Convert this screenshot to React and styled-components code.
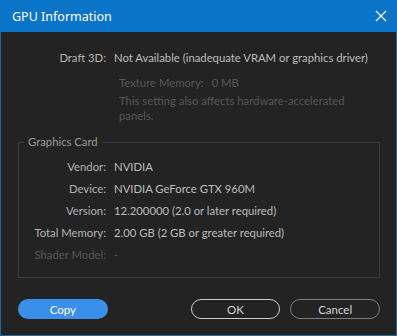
import React from 'react';
import styled, { createGlobalStyle } from 'styled-components';

const GlobalStyle = createGlobalStyle`
  html, body {
    margin: 0;
    padding: 0;
    background: #232323;
  }
  body {
    font-family: Lato, 'Liberation Sans', sans-serif;
  }
`;

const Window = styled.div`
  width: 397px;
  height: 336px;
  box-sizing: border-box;
  border: 1px solid #2b6699;
  border-top: none;
  background: #232323;
  display: flex;
  flex-direction: column;
`;

const TitleBar = styled.div`
  height: 32px;
  margin: 0 -1px;
  background: #0a74c8;
  display: flex;
  align-items: center;
  justify-content: space-between;
  padding: 0 10px 0 12px;
  color: #ffffff;
  font-family: 'Noto Sans', sans-serif;
  font-size: 12.5px;
`;

const CloseButton = styled.span`
  display: flex;
  align-items: center;
`;

const Body = styled.div`
  flex: 1;
  display: flex;
  flex-direction: column;
  padding: 14px 16px 0 16px;
  font-size: 11.3px;
`;

const Row = styled.div`
  display: grid;
  grid-template-columns: ${({ labelWidth }) => labelWidth}px 1fr;
  column-gap: 8px;
  align-items: center;
  height: 22px;
`;

const Label = styled.span`
  text-align: right;
  color: ${({ disabled }) => (disabled ? '#575757' : '#b3b3b3')};
  white-space: nowrap;
`;

const Value = styled.span`
  color: ${({ disabled }) => (disabled ? '#575757' : '#bdbdbd')};
  white-space: nowrap;
`;

const SubBlock = styled.div`
  padding-left: 102px;
  margin-top: 8px;
  display: flex;
  flex-direction: column;
  gap: 3px;
  color: #575757;
  line-height: 14px;
`;

const SubRow = styled.div`
  display: flex;
  gap: 8px;
`;

const Note = styled.div`
  line-height: 15px;
  width: 250px;
`;

const Group = styled.fieldset`
  margin: 12px 0 0 1px;
  padding: 6px 0 12px 0;
  border: 1px solid #3a3a3a;
  min-width: 0;
`;

const Legend = styled.legend`
  margin-left: 5px;
  padding: 0 4px;
  color: #9a9a9a;
  line-height: 14px;
`;

const Footer = styled.div`
  display: flex;
  align-items: center;
  padding: 21px 0 0 1px;
`;

const Button = styled.button`
  width: 90px;
  height: 20px;
  border-radius: 10px;
  font-family: Lato, 'Liberation Sans', sans-serif;
  font-size: 11.5px;
  padding: 0;
  box-sizing: border-box;
  background: ${({ primary }) => (primary ? '#3a8fea' : 'transparent')};
  border: ${({ primary, outline }) =>
    primary ? 'none' : `1.5px solid ${outline}`};
  color: ${({ primary }) => (primary ? '#ffffff' : '#d6d6d6')};
  margin-left: ${({ gap }) => gap || 0}px;
`;

const cardRows = [
  { label: 'Vendor:', value: 'NVIDIA' },
  { label: 'Device:', value: 'NVIDIA GeForce GTX 960M' },
  { label: 'Version:', value: '12.200000 (2.0 or later required)' },
  { label: 'Total Memory:', value: '2.00 GB (2 GB or greater required)' },
  { label: 'Shader Model:', value: '-', disabled: true },
];

const App = () => (
  <>
    <GlobalStyle />
    <Window>
      <TitleBar>
        <span>GPU Information</span>
        <CloseButton>
          <svg width="12" height="12" viewBox="0 0 12 12">
            <path d="M1 1L11 11M11 1L1 11" stroke="#fff" strokeWidth="1.3" />
          </svg>
        </CloseButton>
      </TitleBar>
      <Body>
        <Row labelWidth={89}>
          <Label>Draft 3D:</Label>
          <Value>Not Available (inadequate VRAM or graphics driver)</Value>
        </Row>
        <SubBlock>
          <SubRow>
            <span>Texture Memory:</span>
            <span>0 MB</span>
          </SubRow>
          <Note>This setting also affects hardware-accelerated panels.</Note>
        </SubBlock>
        <Group>
          <Legend>Graphics Card</Legend>
          {cardRows.map((d) => (
            <Row key={d.label} labelWidth={87}>
              <Label disabled={d.disabled}>{d.label}</Label>
              <Value disabled={d.disabled}>{d.value}</Value>
            </Row>
          ))}
        </Group>
        <Footer>
          <Button primary>Copy</Button>
          <Button outline="#cfcfcf" gap={83}>OK</Button>
          <Button outline="#7e7e7e" gap={10}>Cancel</Button>
        </Footer>
      </Body>
    </Window>
  </>
);

export default App;
